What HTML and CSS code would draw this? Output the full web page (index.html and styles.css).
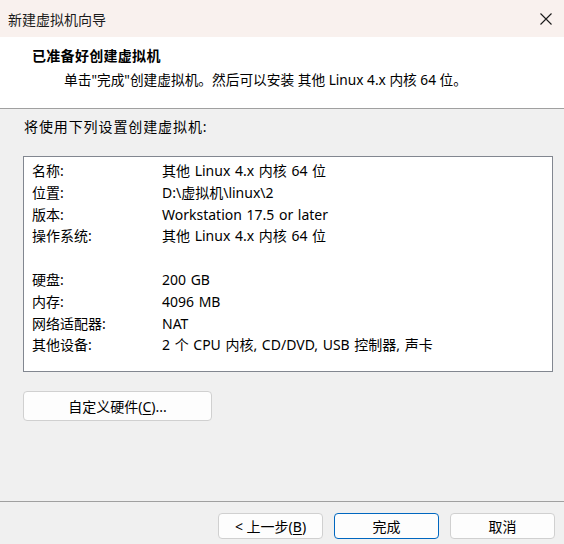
FILE: index.html
```html
<!DOCTYPE html>
<html lang="zh-CN">
<head>
<meta charset="utf-8">
<link rel="stylesheet" href="styles.css">
</head>
<body>
<div class="window">
  <div class="titlebar">
    <span class="title">新建虚拟机向导</span>
    <svg class="close" width="12" height="12" viewBox="0 0 12 12"><path d="M0.5 0.5L11.5 11.5M11.5 0.5L0.5 11.5" stroke="#1a1a1a" stroke-width="1.1" fill="none"/></svg>
  </div>
  <div class="header">
    <div class="h-title">已准备好创建虚拟机</div>
    <div class="h-sub">单击"完成"创建虚拟机。然后可以安装 其他 Linux 4.x 内核 64 位。</div>
  </div>
  <div class="content">
    <div class="intro">将使用下列设置创建虚拟机:</div>
    <div class="summary">
      <div class="row"><span class="k">名称:</span><span class="v">其他 Linux 4.x 内核 64 位</span></div>
      <div class="row"><span class="k">位置:</span><span class="v">D:\虚拟机\linux\2</span></div>
      <div class="row"><span class="k">版本:</span><span class="v">Workstation 17.5 or later</span></div>
      <div class="row"><span class="k">操作系统:</span><span class="v">其他 Linux 4.x 内核 64 位</span></div>
      <div class="row"></div>
      <div class="row"><span class="k">硬盘:</span><span class="v">200 GB</span></div>
      <div class="row"><span class="k">内存:</span><span class="v">4096 MB</span></div>
      <div class="row"><span class="k">网络适配器:</span><span class="v">NAT</span></div>
      <div class="row"><span class="k">其他设备:</span><span class="v">2 个 CPU 内核, CD/DVD, USB 控制器, 声卡</span></div>
    </div>
    <button class="btn custom">自定义硬件(<u>C</u>)...</button>
  </div>
  <div class="footer">
    <button class="btn nav">&lt; 上一步(<u>B</u>)</button>
    <button class="btn nav primary">完成</button>
    <button class="btn nav">取消</button>
  </div>
</div>
</body>
</html>
```
FILE: styles.css
```css
html, body {
  margin: 0;
  padding: 0;
}
body {
  width: 564px;
  height: 544px;
  background: #f0f0f0;
  font-family: "Noto Sans", "Noto Sans CJK SC", sans-serif;
  font-size: 14px;
  color: #000;
  overflow: hidden;
}
.window {
  display: flex;
  flex-direction: column;
  height: 544px;
}
.titlebar {
  height: 37px;
  flex: none;
  background: #f9f1ee;
  display: flex;
  align-items: center;
  justify-content: space-between;
  padding: 0 12px 0 8px;
  box-sizing: border-box;
}
.title {
  font-size: 14px;
  color: #1a1a1a;
}
.close {
  display: block;
}
.header {
  height: 72px;
  flex: none;
  box-sizing: border-box;
  background: #fff;
  border-bottom: 1px solid #a0a0a0;
  padding: 7px 0 0 32px;
}
.h-title {
  font-weight: bold;
  font-size: 14px;
  line-height: 22px;
  letter-spacing: 0.3px;
  font-family: "Noto Sans CJK SC", sans-serif;
}
.h-sub {
  padding-left: 32px;
  margin-top: 3px;
  line-height: 22px;
  font-size: 13.7px;
}
.content {
  flex: 1;
  padding: 8px 12px 0 23px;
  display: flex;
  flex-direction: column;
  align-items: flex-start;
}
.intro {
  line-height: 20px;
  padding-left: 1px;
  letter-spacing: 0.9px;
}
.summary {
  margin-top: 19px;
  width: 530px;
  height: 216px;
  box-sizing: border-box;
  background: #fff;
  border: 1px solid #828790;
  padding: 3px 0 0 8px;
}
.row {
  display: flex;
  height: 21.8px;
  line-height: 21.8px;
}
.k {
  width: 130px;
}
.v {
  word-spacing: 1px;
}
.btn {
  font-family: inherit;
  font-size: 14px;
  color: #000;
  background: #fdfdfd;
  border: 1px solid #d0d0d0;
  border-radius: 4px;
  padding: 0;
  box-sizing: border-box;
}
.btn u {
  text-decoration-thickness: 1px;
  text-underline-offset: 2px;
}
.custom {
  margin-top: 19px;
  width: 189px;
  height: 30px;
}
.footer {
  height: 43px;
  flex: none;
  border-top: 1px solid #a0a0a0;
  display: flex;
  justify-content: flex-end;
  align-items: flex-start;
  gap: 11px;
  padding: 11px 9px 0 0;
  box-sizing: border-box;
}
.nav {
  width: 105px;
  height: 26px;
}
.primary {
  border: 1px solid #0067c0;
}
```
